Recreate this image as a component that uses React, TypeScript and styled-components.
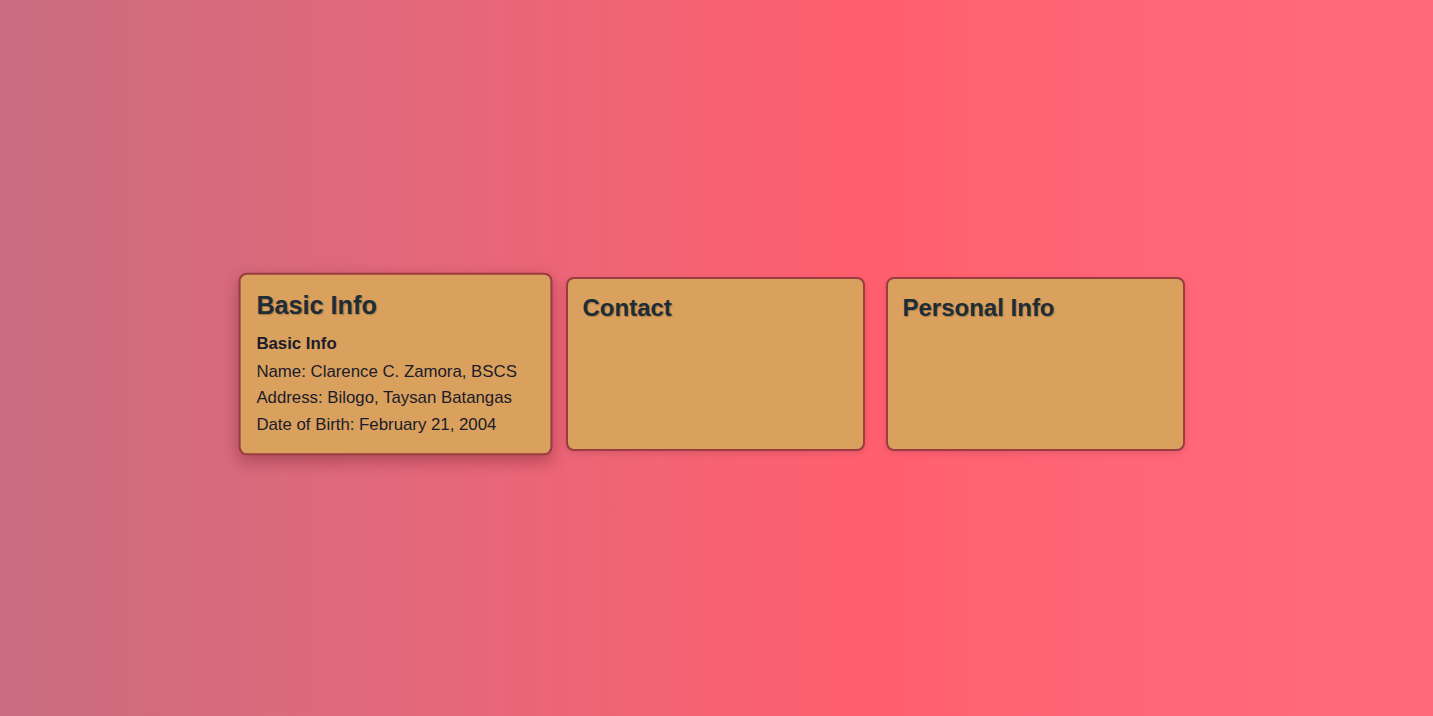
import React from 'react';
import styled, { createGlobalStyle, css } from 'styled-components';

const GlobalStyle = createGlobalStyle`
  html, body {
    margin: 0;
    padding: 0;
  }
  body {
    font-family: "Liberation Sans", Arial, sans-serif;
    background: linear-gradient(to right, #c96d80 0%, #e4687a 30%, #ff5f6e 60%, #ff6676 80%, #ff6b7a 100%);
    min-height: 100vh;
  }
`;

const Page = styled.main`
  min-height: 100vh;
  box-sizing: border-box;
  padding-top: 12px;
  display: flex;
  align-items: center;
  justify-content: center;
`;

const CardRow = styled.section`
  display: flex;
  gap: 21px;
  margin-left: -3px;
`;

const Card = styled.div<{ $active?: boolean }>`
  box-sizing: border-box;
  width: 299px;
  height: 174px;
  padding: 15px;
  background: #d9a15d;
  border: 2px solid #9b3b42;
  border-radius: 8px;
  box-shadow: 0 2px 6px rgba(0, 0, 0, 0.12);
  color: #1b1b2a;

  ${({ $active }) =>
    $active &&
    css`
      transform: scale(1.05);
      box-shadow: 0 6px 14px rgba(90, 20, 30, 0.35);
    `}
`;

const CardTitle = styled.h2`
  margin: 0 0 10px;
  font-size: 24px;
  font-weight: bold;
  color: #1d2c35;
  text-shadow: 1px 1px 1px rgba(0, 0, 0, 0.25);
`;

const Label = styled.p`
  margin: 0;
  font-size: 16px;
  line-height: 1.6;
  font-weight: bold;
`;

const Line = styled.p`
  margin: 0;
  font-size: 16px;
  line-height: 1.6;
`;

const basicInfo = [
  'Name: Clarence C. Zamora, BSCS',
  'Address: Bilogo, Taysan Batangas',
  'Date of Birth: February 21, 2004',
];

const App: React.FC = () => {
  return (
    <>
      <GlobalStyle />
      <Page>
        <CardRow>
          <Card $active>
            <CardTitle>Basic Info</CardTitle>
            <Label>Basic Info</Label>
            {basicInfo.map((line) => (
              <Line key={line}>{line}</Line>
            ))}
          </Card>
          <Card>
            <CardTitle>Contact</CardTitle>
          </Card>
          <Card>
            <CardTitle>Personal Info</CardTitle>
          </Card>
        </CardRow>
      </Page>
    </>
  );
};

export default App;
